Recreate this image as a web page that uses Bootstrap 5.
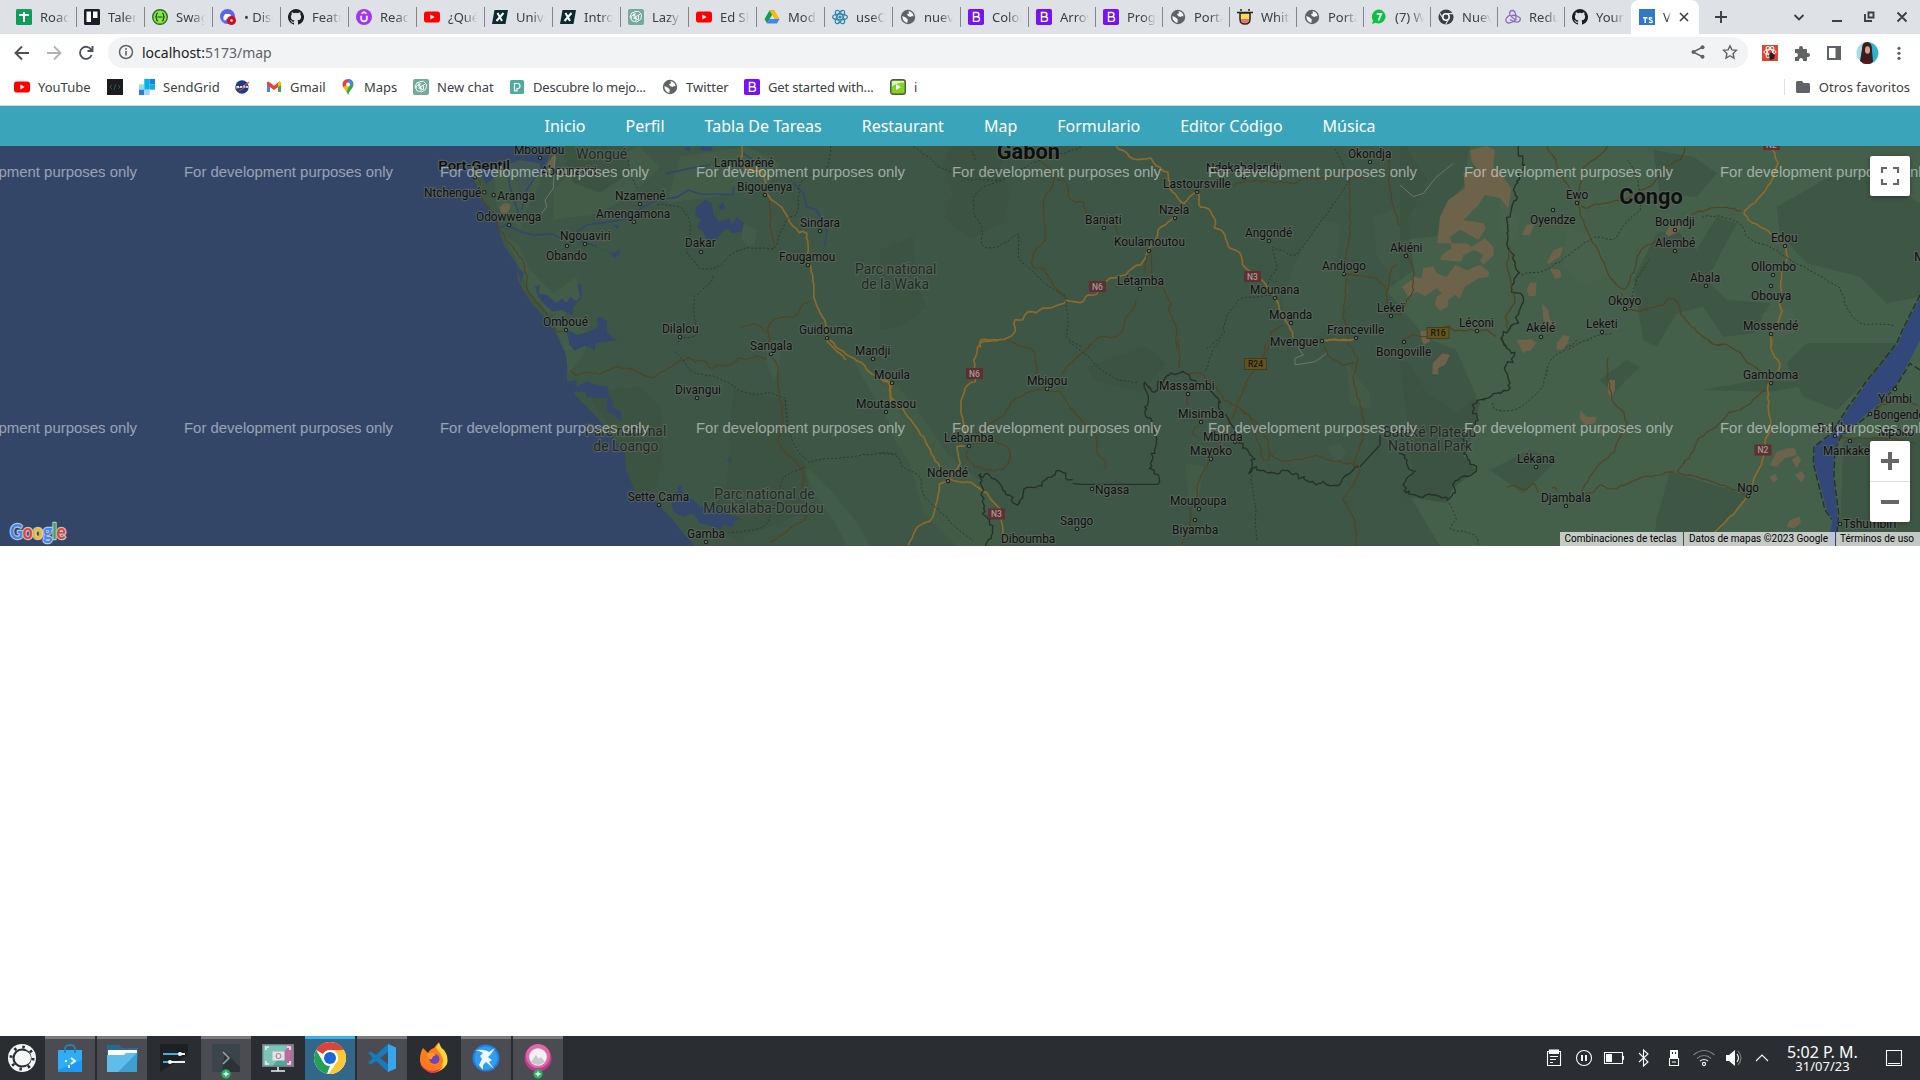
<!DOCTYPE html>
<html lang="es">
<head>
<meta charset="utf-8">
<title>Vite + React + TS</title>
<link rel="stylesheet" href="https://cdn.jsdelivr.net/npm/bootstrap@5.3.0/dist/css/bootstrap.min.css">
<style>
body{font-family:"Noto Sans","Open Sans",sans-serif;font-size:13px;line-height:18px;height:1080px;overflow:hidden;color:#3c4043}
svg{display:block;flex:none}
.ic{width:16px;height:16px}
.strip{height:34px;background:#dee1e6;padding-left:9px}
.tb{width:68px;height:34px;padding-left:7px;position:relative}
.tb.nar{width:67px}
.tb::after{content:"";position:absolute;right:0;top:7px;width:1px;height:20px;background:#80868b}
.tb.nosep::after{display:none}
.tt{width:29px;overflow:hidden;white-space:nowrap;-webkit-mask-image:linear-gradient(90deg,#000 55%,transparent)}
.tb.act{width:68px;background:#fff;border-radius:8px 8px 0 0;padding-left:8px;margin-left:-1px}
.tb.act::after{display:none}
.tb.act .tt{width:8px}
.tool{height:36px}
.omni{height:31px;width:1640px;border-radius:16px;background:#f1f3f4;font-size:14px;color:#5f6368;padding-left:10px;padding-right:10px}
.omni b{font-weight:400;color:#202124}
.omni .url{padding-top:2px}
.marks{height:36px;border-bottom:1px solid #d5d7da;padding:0 10px 1px 14px;gap:16px;white-space:nowrap}
.marks .mk{gap:8px}
.m58{width:58px}.m57{width:57px}.m66{width:66px}.m77{width:77px}.m79{width:79px}.m80{width:80px}
.m130{width:130px;letter-spacing:-.16px}.m137{width:137px;letter-spacing:-.22px}
.site{height:40px;background:#3aa5ba;gap:40px;font-size:16px;color:#fff}
.site a{color:#fff;text-decoration:none}
.mapbox{height:400px;background:#344668;position:relative;overflow:hidden}
.lb{font-family:Roboto,sans-serif;font-size:36px;fill:#0d100e;stroke:#5c665f;stroke-opacity:.75;stroke-width:7px;paint-order:stroke;stroke-linejoin:round}
.lb.pk{font-size:42px;fill:#1d2b23}
.lb.big{font-size:66px;font-weight:700}
.lb.cap{font-size:39px;font-weight:500}
.wm{font-family:"Liberation Sans",sans-serif;font-size:15.400px;fill:#fff;fill-opacity:.5}
.y{fill:none;stroke:#8f6a29;stroke-width:5;stroke-linejoin:round}
.b{fill:none;stroke:#54431f;stroke-width:3.4;stroke-linejoin:round}
.d{fill:none;stroke:#2b3830;stroke-width:3;stroke-dasharray:6 6}
.k{fill:none;stroke:#26302a;stroke-width:4;stroke-linejoin:round}
.w{fill:#33466c}
.wl{fill:none;stroke:#33466c;stroke-width:5}
.t{fill:#6d634a}
.l{fill:#445f4a}
.g{fill:#3c5341}
.ctl{position:absolute;right:10px;width:40px;background:#fff;border-radius:2px;box-shadow:0 1px 4px rgba(0,0,0,.3)}
.attr{position:absolute;right:0;bottom:0;height:14px;font:10px/14px Roboto,sans-serif;color:#000;gap:1px}
.attr span{background:rgba(245,245,245,.72);text-align:center;white-space:nowrap;padding-right:2px}
.task{height:44px;background:#2a2e32;color:#fcfcfc}
.tk{width:50px;height:44px;margin-right:2px;position:relative;border-top:3px solid transparent}
.tk.on{background:#4b4c51;border-top-color:#76787b}
.tk.cur{background:#33678a;border-top-color:#3daee9}
.tk>svg{margin-bottom:3px}
.plus{position:absolute;left:20px;bottom:-2px}
.clk{width:80px;font-size:16px;line-height:17px;text-align:center;white-space:nowrap;padding-left:1px}
.clk small{display:block;font-size:13px;line-height:11px}
</style>
<script src="https://cdn.jsdelivr.net/npm/bootstrap@5.3.0/dist/js/bootstrap.bundle.min.js"></script>
</head>
<body class="d-flex flex-column bg-white">
<svg width="0" height="0" class="position-absolute">
<symbol id="sheet" viewBox="0 0 16 16"><rect width="16" height="16" rx="1.5" fill="#0f9d58"/><path d="M3 6h10M8 3v10" stroke="#fff" stroke-width="2"/></symbol>
<symbol id="trello" viewBox="0 0 16 16"><rect width="16" height="16" rx="1.5" fill="#1c1c2a"/><path d="M2.5 2.500h4.500v10.500h-4.500zM9 2.500h4.500v6.500H9z" fill="#fff"/></symbol>
<symbol id="swag" viewBox="0 0 16 16"><circle cx="8" cy="8" r="7.300" fill="#85ea2d" stroke="#2f6b2f" stroke-width="1.400"/><path d="M6 4Q4.500 4 4.500 6T3.300 8q1.200 0 1.200 2T6 12M10 4q1.500 0 1.500 2t1.200 2q-1.200 0-1.200 2T10 12M5.500 8h5" stroke="#173647" fill="none" stroke-width="1.200"/></symbol>
<symbol id="disc" viewBox="0 0 16 16"><circle cx="7.500" cy="7.500" r="7.500" fill="#5865f2"/><path d="M3.500 11q-.5-4 1.500-6h5q2 2 1.500 6l-2 .5-1-1.300H6.500l-1 1.300z" fill="#fff"/><circle cx="11.500" cy="11.500" r="4.500" fill="#d30b14"/><circle cx="11.500" cy="11.500" r="1.300" fill="#fff"/></symbol>
<symbol id="gh" viewBox="0 0 16 16"><path fill="#1b1f23" d="M8 0a8 8 0 0 0-2.530 15.590c.4.070.55-.17.55-.38v-1.490c-2.230.49-2.690-.95-2.690-.95-.36-.92-.89-1.170-.89-1.170-.73-.49.050-.48.050-.48.8.060 1.230.83 1.230.83.71 1.220 1.870.87 2.330.66.070-.51.280-.87.5-1.070-1.770-.2-3.640-.89-3.640-3.950 0-.87.31-1.590.82-2.150-.080-.2-.36-1.020.080-2.120 0 0 .67-.21 2.200.82a7.600 7.600 0 0 1 4 0c1.530-1.040 2.200-.82 2.200-.82.44 1.100.16 1.920.080 2.120.51.560.82 1.280.82 2.150 0 3.070-1.870 3.750-3.650 3.950.29.250.54.730.54 1.480v2.190c0 .21.150.46.55.38A8 8 0 0 0 8 0z"/></symbol>
<symbol id="udemy" viewBox="0 0 16 16"><circle cx="8" cy="8" r="8" fill="#a435f0"/><path d="M5.200 6.800v3a2.800 2.500 0 0 0 5.600 0v-3M5.500 4.600 8 3l2.500 1.600" fill="none" stroke="#fff" stroke-width="1.700"/></symbol>
<symbol id="yt" viewBox="0 0 16 16"><rect y="2.500" width="16" height="11" rx="2.800" fill="#f00"/><path d="M6.400 5.600v4.800L10.600 8z" fill="#fff"/></symbol>
<symbol id="xx" viewBox="0 0 16 16"><path d="M2.500 1H16l-2.500 14H0z" fill="#0b2a30"/><path d="M5.500 4l4.500 8M11.500 4 4.500 12" stroke="#fff" stroke-width="2"/></symbol>
<symbol id="gpt" viewBox="0 0 16 16"><rect width="16" height="16" rx="2" fill="#75a99c"/><g fill="none" stroke="#fff" stroke-width=".9"><path d="M8 2.500q3-1 4.200 1.500 2.300 1.500 1 4 .2 3-2.400 3.600-2 2.300-4.200.8-3 .3-3.500-2.500-2-2-.3-4Q3.500 3 6 3.300 7 2.300 8 2.500z"/><path d="M6 3.500v5l4.500 2.500M12.500 5 8 7.500V12M3.300 9.500V7L8 4.500M10.500 6.500v4M8 7.500 5.500 6M5.500 9.500 8 8.500"/></g></symbol>
<symbol id="drive" viewBox="0 0 16 16"><path d="M5.500 1.500h5L8 6 3 14.500.500 10z" fill="#0f9d58"/><path d="M5.500 1.500h5l5 8.500h-5z" fill="#fbbc04"/><path d="M5.500 10h10L13 14.500H3z" fill="#4285f4"/></symbol>
<symbol id="react" viewBox="0 0 16 16"><g fill="none" stroke="#2c87a8" stroke-width="1.200"><ellipse cx="8" cy="8" rx="7.400" ry="2.900"/><ellipse cx="8" cy="8" rx="7.400" ry="2.900" transform="rotate(60 8 8)"/><ellipse cx="8" cy="8" rx="7.400" ry="2.900" transform="rotate(120 8 8)"/></g><circle cx="8" cy="8" r="1.600" fill="#2c87a8"/></symbol>
<symbol id="globe" viewBox="0 0 16 16"><circle cx="8" cy="8" r="7.200" fill="#5f6368"/><path d="M8.500 2q5 1 5 5.500L12 7l-1.500 1L8 7 7 5l2-.5zM2.300 7l3.500 1.500 2 2-.5 3.500Q2.500 12.500 2.300 7z" fill="#fff" opacity=".95"/></symbol>
<symbol id="boot" viewBox="0 0 16 16"><rect width="16" height="16" rx="1.800" fill="#7712f5"/><path d="M5.500 3.500h3.300a2.100 2.100 0 0 1 0 4.200H5.500zm0 4.200h3.700a2.300 2.300 0 0 1 0 4.700H5.500z" fill="none" stroke="#fff" stroke-width="1.400"/></symbol>
<symbol id="mask" viewBox="0 0 16 16"><path d="M0 3.500h16M4 0v2M12 0v2" stroke="#222" stroke-width="1.500"/><path d="M3 4h10v6q0 5-5 5t-5-5z" fill="#fbdc4a" stroke="#222" stroke-width="1.500"/><path d="M4 10h8q0 4-4 4t-4-4z" fill="#ef6a85"/></symbol>
<symbol id="wa" viewBox="0 0 16 16"><path d="M8 .5a7 7 0 1 1-3.500 13.300L1 15l1-3.500A7.200 7.200 0 0 1 8 .5z" fill="#0ac244"/><path d="M5.800 4.800h4.400L7.500 11.500" stroke="#fff" stroke-width="1.800" fill="none"/></symbol>
<symbol id="chr" viewBox="0 0 16 16"><circle cx="8" cy="8" r="7.600" fill="#3c4043"/><circle cx="8" cy="8" r="3.200" fill="none" stroke="#fff" stroke-width="1.500"/><path d="M8 4.600h7M5 9.500 1.700 4M10.800 9.800 7.600 15.500" stroke="#dee1e6" stroke-width="1.100"/></symbol>
<symbol id="redux" viewBox="0 0 16 16"><g fill="none" stroke="#8b6ac4" stroke-width="1.300"><path d="M11 9.500Q11 1.500 7.500 1.500T5 6q2 3 6 5M5 6q-5 3-4 6t5 1.500 5.500-3.500M5 10.500Q12 15 14.500 12T12 7Q9 5.500 6 7"/></g></symbol>
<symbol id="ts" viewBox="0 0 16 16"><rect width="16" height="16" fill="#3178c6"/><path d="M4 8.700h4.500M6.200 8.700V14M13.200 9.300q-3-1.300-3 .5 0 .9 1.500 1.300t1.500 1.400q0 1.800-3.300.7" fill="none" stroke="#fff" stroke-width="1.400"/></symbol>
<symbol id="chrome" viewBox="0 0 32 32"><circle cx="16" cy="16" r="16" fill="#fff"/><path d="M16 0a16 16 0 0 1 13.860 8H16a8 8 0 0 0-6.930 4L2.140 8A16 16 0 0 1 16 0z" fill="#dc4437"/><path d="M2.140 8 9.070 20A8 8 0 0 0 16 24L13 31.700A16 16 0 0 1 2.140 8z" fill="#22a055"/><path d="M29.860 8A16 16 0 0 1 14.500 31.900L22.930 20A8 8 0 0 0 22 10.500L20 8z" fill="#fcc934"/><circle cx="16" cy="16" r="7.800" fill="#fff"/><circle cx="16" cy="16" r="6" fill="#1a67dd"/></symbol>
</svg>

<header>
 <div class="strip d-flex" id="tabs"></div>
 <div class="tool d-flex align-items-center">
  <svg width="108" height="36" viewBox="0 34 108 36" fill="none" stroke="#4d5156" stroke-width="1.900"><path d="M29 53H16M22 46.500 15.500 53l6.500 6.500"/><path stroke="#b0b3b6" d="M47 53h13M54 46.500l6.500 6.500-6.500 6.500"/><path d="M91.300 50a6 6 0 1 0 .3 5M92.500 46v5h-5"/></svg>
  <div class="omni d-flex align-items-center gap-2">
   <svg class="ic" viewBox="0 0 16 16"><circle cx="8" cy="8" r="6.500" fill="none" stroke="#5f6368" stroke-width="1.500"/><path d="M8 7v4.500M8 4v1.700" stroke="#5f6368" stroke-width="1.600"/></svg>
   <span class="url flex-grow-1"><b>localhost:</b>5173/map</span>
   <svg class="ic me-2" viewBox="0 0 16 16" fill="#5f6368"><path d="M13 3 3 8l10 5" fill="none" stroke="#5f6368" stroke-width="1.400"/><circle cx="3.500" cy="8" r="2"/><circle cx="12.500" cy="3.300" r="2"/><circle cx="12.500" cy="12.700" r="2"/></svg>
   <svg class="ic" viewBox="0 0 16 16"><path d="M8 1.800l1.900 4.100 4.500.5-3.300 3.100.9 4.500-4-2.300L4 14l.9-4.500L1.600 6.400l4.500-.5z" fill="none" stroke="#5f6368" stroke-width="1.400"/></svg>
  </div>
  <svg width="172" height="36" viewBox="1748 34 172 36"><rect x="1762" y="45" width="16" height="16" fill="#dc4637"/><g fill="none" stroke="#fff"><ellipse cx="1770" cy="52" rx="6" ry="2.500"/><ellipse cx="1770" cy="52" rx="6" ry="2.500" transform="rotate(60 1770 52)"/><ellipse cx="1770" cy="52" rx="6" ry="2.500" transform="rotate(120 1770 52)"/></g><path d="M1769 55l2-3 4 3-1 4-4 1z" fill="#301e1c"/>
  <path d="M1795 49h4v-1a2 2 0 0 1 4 0v1h4v4h1a2 2 0 0 1 0 4h-1v4h-4v-1a2 2 0 0 0-4 0v1h-4v-4h1a2 2 0 0 0 0-4h-1z" fill="#5f6368"/><path d="M1828 47h12v12h-12z" fill="none" stroke="#5f6368" stroke-width="2"/><path d="M1835.500 47h5v12h-5z" fill="#5f6368"/>
  <circle cx="1867.500" cy="53" r="11" fill="#a9dbe4"/><path d="M1867.500 42a11 11 0 0 1 5 20.700z" fill="#2db4cc"/><path d="M1867 42q-5 0-5 7l-2 12q3 3 7 3t6-2l-1-12q0-8-5-8z" fill="#3b1d20"/><ellipse cx="1867.500" cy="50" rx="2.500" ry="3.800" fill="#d9a290"/><path d="M1862 63q5-6 10 0-5 2-10 0z" fill="#61151f"/><g fill="#5f6368"><circle cx="1899" cy="48.300" r="1.600"/><circle cx="1899" cy="53.300" r="1.600"/><circle cx="1899" cy="58.300" r="1.600"/></g></svg>
 </div>
 <div class="marks d-flex align-items-center">
  <div class="mk m77 d-flex align-items-center"><svg class="ic"><use href="#yt"/></svg>YouTube</div>
  <svg class="ic" viewBox="0 0 16 16"><path d="M0 0h16v16H0z" fill="#1c1b1f"/><path d="M5 6 3 8l2 2M11 6l2 2-2 2M9 5l-2 6" fill="none" stroke="#1c5a54"/></svg>
  <div class="mk m79 d-flex align-items-center"><svg class="ic" viewBox="0 0 16 16"><path d="M0 5.300h5.300v5.400H0z" fill="#9dd6f5"/><path d="M0 10.700h5.300V16H0z" fill="#1a82e2"/><path d="M5.300 0h5.400v10.700H5.300z" fill="#00b3e3"/><path d="M10.700 0H16v5.300h-5.300z" fill="#1a82e2"/><path d="M10.700 5.300H16v5.400h-5.300z" fill="#1aa5ee"/><path d="M5.300 10.700h5.400V16H5.300z" fill="#9dd6f5"/></svg>SendGrid</div>
  <svg class="ic" viewBox="0 0 16 16"><circle cx="8" cy="8" r="6.700" fill="#1c3d86"/><path d="M1 10q7-1 14-7-4 7-10 9" fill="none" stroke="#dd4b4b"/><path d="M3 9V7l1.500 2V7M6 9l1-2 1 2M11 7H9.500l1 1-1 1M12 9l1-2 1 2" stroke="#fff" fill="none"/></svg>
  <div class="mk m58 d-flex align-items-center"><svg class="ic" viewBox="0 0 16 16"><path d="M1 3.500V13h3V7z" fill="#4285f4"/><path d="M15 3.500V13h-3V7z" fill="#34a853"/><path d="M1 3.500V6l7 5 7-5V3.500L13.500 2.500 8 6.700 2.500 2.500z" fill="#ea4335"/><path d="M15 3.500V6l-3 2.200V3.700l1.500-1.200z" fill="#fbbc04"/></svg>Gmail</div>
  <div class="mk m57 d-flex align-items-center"><svg class="ic" viewBox="0 0 16 16"><path d="M8 0a5.500 5.500 0 0 1 5.500 5.500C13.500 9 9.500 11 8 16z" fill="#34a853"/><path d="M8 0a5.500 5.500 0 0 0-5.500 5.500Q2.500 7 3.500 8.500L8 5.500z" fill="#ea4335"/><path d="M8 0q4 0 5.200 4L8 8z" fill="#4285f4"/><path d="M3.500 8.500 8 5l2 3-3.500 5z" fill="#fbbc04"/><path d="M6.500 13Q7.500 14 8 16q1.500-5 4-7.500L9 7z" fill="#34a853"/><circle cx="8" cy="5.500" r="2" fill="#fff"/></svg>Maps</div>
  <div class="mk m80 d-flex align-items-center"><svg class="ic"><use href="#gpt"/></svg>New chat</div>
  <div class="mk m137 d-flex align-items-center"><svg class="ic" viewBox="0 0 16 16"><rect x="1" y="1" width="14" height="14" rx="1.500" fill="#4fab9d"/><path d="M5.500 4.500h3q2.500 0 2.500 2.500T8.500 9.500H8V12H5.500z" fill="none" stroke="#fff" stroke-width="1.200"/></svg>Descubre lo mejo...</div>
  <div class="mk m66 d-flex align-items-center"><svg class="ic"><use href="#globe"/></svg>Twitter</div>
  <div class="mk m130 d-flex align-items-center"><svg class="ic"><use href="#boot"/></svg>Get started with...</div>
  <div class="mk d-flex align-items-center"><svg class="ic" viewBox="0 0 16 16"><rect x=".7" y=".7" width="14.600" height="14.600" rx="2.500" fill="#7fd321" stroke="#4c5a4a" stroke-width="1.400"/><path d="M2 2h12v1.500q-7 0-12 4z" fill="#dff3c4"/><path d="M6 5v6l5-3z" fill="#fff"/></svg>i</div>
  <div class="mk d-flex align-items-center ms-auto"><span class="border-start" style="height:16px;margin-right:2px"></span><svg class="ic" viewBox="0 0 16 16"><path d="M1 3.500Q1 2 2.500 2H7l1.500 2h5Q15 4 15 5.500v7q0 1.500-1.500 1.500h-11Q1 14 1 12.500z" fill="#5f6368"/></svg>Otros favoritos</div>
 </div>
</header>

<nav class="site d-flex justify-content-center align-items-center">
 <a>Inicio</a><a>Perfil</a><a>Tabla De Tareas</a><a>Restaurant</a><a>Map</a><a>Formulario</a><a>Editor Código</a><a>Música</a>
</nav>

<main class="flex-grow-1">
<div class="mapbox">
<svg width="1920" height="400" viewBox="0 146 1920 400">
<rect y="146" width="1920" height="400" fill="#344668"/>
<!-- land mass -->
<path fill="#3e5645" d="M573 146L572 150 558 154 552 150 548 158 542 172 534 180 528 200 518 192 514 178 508 164 500 162 496 176 486 184 480 172 474 168 472 175 483 200 497 218 500 234 505 247 517 265 518 280 523 290 533 305 547 320 556 332 563 344 567 360 567 380 577 397 593 413 613 437 625 453 626 470 637 483 647 490 657 503 673 520 683 533 695 546H1920V146z"/>
<!-- coastal and valley strips -->
<g transform="translate(380 140) scale(.33333)"><path class="l" d="M340 90l80-30 60 10 0 60-40 80-20 60-30-40-40-30zM365 280L420 320 450 390 520 460 590 410 600 470 540 540 480 500 440 440 415 370zM520 560l50-10 60 30-20 50h-60zM520 150l60-60 200-70 60 60-80 80-100 60-140 20zM900 50l200-30 100 50-40 80-160 20-140 20zM1090 250l40 20-5 40-20 10-20-20z" opacity=".75"/><path class="g" d="M540 18h200l10 80-90 60-80-30z"/></g>
<g transform="translate(380 340) scale(.33333)"><path class="g" d="M690 150l90-10 60 60 10 130-20 110-60 30-30-80-5-50-60-100-40-60zM1060 150l160 30 20 150 50 60-20 130-200 80-100-60 70-100z"/><path class="l" d="M565 100L550 0h80l-30 60zM1280 380l80 80 80 100 30 58h-70l-30-60-60-90-30-60zM1160 0h40v90l-20 30-20-50zM1410 40l70 60 80 110v110l-60-120-60-100z" opacity=".65"/></g>
<g transform="translate(880 140) scale(.33333)"><path class="g" d="M210 18h190l-40 60 30 80-20 90-100 50-80-70 30-70-30-80zM0 330l100-40 10 150 30 60-80 60-60 10z" opacity=".8"/><path class="l" d="M1240 380l80-140 60 10-10 120 40 80-20 80-110 80-70-60 0-80zM1560 200l-80 30 10 120 70 90z" opacity=".45"/></g>
<g transform="translate(880 340) scale(.33333)"><path class="l" d="M0 90l80 80 60 80 70 100 100 80 50 100v88H230l-100-100-40-150-60-90zM915 370l60 10-20 100-30-10zM1400 70l70 90 0 50-60-20zM1340 320l40-10 20 30-30 30z" opacity=".6"/><path class="g" d="M620 80l180-60 60 50-80 90-140-40z" opacity=".7"/></g>
<path class="l" d="M1406 146h514v400H1440l-30-50 34-30 10-26 22-20 0-25-20-45-30-12-40-48 28-20-6-50 20-40z"/>
<!-- woodland patches on the plateau -->
<g transform="translate(1400 140) scale(.33333)"><path class="g" d="M0 18h210l-10 60-10 60-60 70-20 80L0 300zM1130 200l160-90 120-10 150 90v280l-100 20-80-80-160-40-80-90zM700 420l70-140 60-10 60 60 60-100 60 20-90 170 60 60 130 10-50 90-90 10-60-90-80 20-60 100-40-20zM760 30l120 20 70 50-60 70-110-10z" opacity=".7"/><path fill="#506657" opacity=".25" d="M500 260l90 30 40 110-70 40-70-60zM1080 520l90-20 30 70-90 40zM300 180l60 60-20 70-40-30z"/></g>
<g transform="translate(1400 340) scale(.33333)"><path class="g" d="M0 60l30 10 50 90 90 60 50-45 20 10-22 100-30 60 38 44-70 60-16 40-130-20-10-30 40-30z"/><path class="g" d="M810 395l230 70-120 153H760l10-80zM1160 70l60-60h270l-40 70-80 70-60 60-100-40zM1330 300l230-20v338h-240zM600 120l80-60 40 20-80 80zM910 150l160-30 190 10-150 25zM270 390l120-60 80 30-100 100z" opacity=".7"/></g>
<!-- savanna -->
<g transform="translate(1400 140) scale(.33333)"><path class="t" d="M210 30L260 18 285 30 280 80 300 100 335 145 325 205 300 175 255 165 235 195 190 240 250 250 258 265 235 300 200 280 180 270 150 290 155 310 112 310 120 230 145 180 195 145 190 100 235 90 215 65zM125 345L155 325 150 310 200 310 215 320 255 295 280 320 282 345 250 375 240 360 250 345 225 330 190 345 185 365 120 360zM5 440L35 420 40 410 65 415 70 385 100 378 110 400 140 410 165 375 200 390 240 375 268 395 265 412 235 415 195 440 180 475 165 465 145 480 145 500 120 512 105 495 110 470 125 460 110 445 75 468 50 455 25 470zM365 285l15-30 25-5-15 35zM440 370l20-40 30-10-10 30-30 20zM450 385l30 5 5 20-20 8zM380 450l10-22 20 0-3 40-20 0zM425 490l20 20 5 30 20 10-15 15-25 5 0-40zM355 600l40-2 15 10-20 25-25 0zM470 610l20-25 20 5-20 38-20 2zM60 575l25-5 5 35-20 10zM795 280l20-30 30 0-10 25-30 15z"/></g>
<g transform="translate(1400 340) scale(.33333)"><path class="t" d="M350 0h50l-10 25-20 15zM475 5h35l-30 25zM98 70l30-30 22 5-15 30-20 10 0 18-18 0zM625 120l20 0 0 30-12 25-10-20zM540 210l20 20 30 0-5 20-30 5-15-20zM595 265l15 5-5 18zM1110 375l20-40 30-10 25 0 5 20-35 10-25 25zM1175 360l20-15 8 15-12 25zM1185 405l20-12 10 15-10 20zM1108 410l18-8 7 15-12 12zM1160 560l10-20 30-10 3 20-20 15z"/></g>
<g transform="translate(380 140) scale(.33333)"><path class="t" d="M360 200q15-18 32-5 0 20-20 25-16-4-12-20zM500 75l20-30 8 10-8 35z"/></g>
<!-- lakes, lagoons, rivers -->
<g transform="translate(380 140) scale(.33333)"><path class="w" d="M945 225L950 200 975 180 995 190 1000 225 1020 245 1050 235 1055 255 1070 230 1092 250 1085 275 1055 280 1045 265 1025 275 1010 300 980 300 970 275 950 260 965 240zM1015 200l15-15 5 20-10 5zM640 320l60 20 22-15-5 20-15 10-12-20zM465 440L480 435 475 460 500 465 530 490 545 475 560 490 570 470 590 485 600 470 592 430 605 435 605 475 580 500 575 525 545 510 520 515 495 495 475 470zM560 575L570 572 590 585 625 575 655 560 650 535 665 530 680 545 682 580 710 600 650 600 640 625 600 612 570 618zM910 25l20-5 0 15zM960 20h35l0 12-30 0zM698 255l20 0-5 12zM412 380l20 20-10 25z"/><path class="wl" d="M350 265L380 255 420 275 460 285 520 282 550 300M590 275L620 255 690 245 750 235 790 200 830 180 890 172 925 150 960 162 1060 163 1060 140M560 285l50 22 40 12M1240 130l30 30 10 40 30 10 30 60-5 50M860 100l70-15 60-10M480 90l-40 60-15 60M380 80l10 60 25 80M1120 60l-30-20"/></g>
<g transform="translate(380 340) scale(.33333)"><path class="w" d="M568 10l60-10h90l-70 8-5 25-10-10-20-5-30 15zM565 125L590 120 590 140 620 125 650 135 685 140 685 170 697 180 697 200 722 215 725 245 700 225 680 210 682 175 620 172 615 155 580 155zM870 460L895 455 895 435 905 435 905 455 940 480 960 500 1000 495 1040 510 1050 525 1082 535 1060 545 1060 562 1030 555 1020 570 1000 560 960 550 940 520 910 530 880 515zM1040 360l15-8-2 15z"/></g>
<g transform="translate(1400 140) scale(.33333)"><path d="M1560 475L1515 560 1495 610 1440 680 1400 730 1350 800 1300 880 1245 920 1243 970 1260 1030 1280 1110 1298 1138 1283 1218H1310L1312 1120 1300 1010 1302 930 1320 890 1360 860 1400 820 1440 790 1490 730 1530 660 1560 600z" fill="#32487a"/><path class="k" stroke-dasharray="20 8" d="M1560 465L1512 560 1490 610 1435 680 1395 730 1345 800 1295 880 1242 920 1240 970 1255 1030 1275 1110 1295 1138M1560 690L1530 670 1490 735 1440 795 1400 830 1322 890 1305 930 1302 1010 1316 1120 1308 1218"/></g>
<!-- road network -->
<g transform="translate(380 140) scale(.33333)"><path class="b" d="M298 120l10 60 40 50 10 40 70 90 12 55 0 20 10 25 60 75 20 40 25 2M1170 180l0 70 10 60 5 20M1300 480l-30 15-25 35-60 5-20 20-5 25-25-30-60 15M1165 570l5 60"/><path class="y" d="M1085 18l5 20-10 25 15 25 55 8 10 60 10 20 30 20 30 50 25 30 25 0 5 90 15 45 5 80 30 50 5 60 60 60"/><path d="M525 45l-5 100-25 35 5 20-15 20" fill="none" stroke="#70746b" stroke-width="3"/><path class="d" d="M745 60l15 60 15 30M820 195h75l35 40 0 80 -15 20 10 15 35 35 45 3 55-50 40-15 60 0 20 10 20-50 25-50 30-10 0-80 20-30 60-15 15-30 5-60 80-5 60 0 40-10 80-2M1000 390v30l-60 50 5 60 7 60-50 0-15 40"/></g>
<g transform="translate(380 340) scale(.33333)"><path class="b" d="M570 90l15 15 40-8 30 5 50-20 40 0 60 30h25v-8l95-53 20 12 25 0 25 22 25-10 30 0 30-22 30 6 10-13 50 12M1175 50L1195 80 1195 150 1210 220 1200 280 1190 305 1220 340 1270 390 1268 450M1285 520L1270 545 1240 555 1215 580 1180 600 1165 618"/><path class="y" d="M1350 0l50 45 50 25 20 30 35 20 25 10 0 20 5 50"/><path class="d" d="M885 35l60 65 70 10 60 40 60 15 30-10 50 20 5 80 25 70 40 40 240-30 35 10M1285 375l-80 40-20 80-25 60-15 10-110 15"/></g>
<g transform="translate(880 140) scale(.33333)"><path class="y" d="M708 18L760 58 810 55 845 90 865 95 870 150 910 190 945 155 955 160 957 200 990 205 1007 245 1005 265 1032 275 1045 325 1078 335 1088 375 1130 410 1155 430 1187 475 1215 545 1232 560 1240 595M910 190L880 235 838 265 828 300 805 333 785 370 755 385 735 405 690 415 655 440 650 465 620 465 605 488 560 482 545 495 485 505 470 518 440 515 430 538 403 540 405 580 375 598 300 605 305 630M1325 600l105 0"/><path class="b" d="M480 60l40 40 0 30-30 50 5 120-30 30-10 50 40 10 20 40 45 45M525 125l20-10 20 30-5 20 20 20h30l0 20 20 20M700 250l20 40M800 340l-5 65M815 340l0 60 30 35 30 60-10 20 25 50 0 50 0 15M770 470L765 500 735 540 725 575 710 590 650 590 625 625M1055 140l40-20 150 10 30-15 60 0 60-10 70 10M1410 110l0 150-10 80-10 60 100 15 30 30 0 60 40 20M1400 410l-10 110 15 60M1160 640l15-65 45-25M1530 30l-5 90 15 80 20 60M1560 370l-25 10-15 80"/><path class="d" d="M100 20l80 60 90 40 100 0 80-50 160-50M270 18l20 60M370 120l-60 20-30 30 5 60 20 20 0 70 40 3 70-40 0 70 80 80 60 30 10 60-5 70 50 30M1360 18L1412 120 1245 352 1170 315 1195 380 1160 435 1180 465 1080 475 1040 530 1030 580 975 630"/></g>
<g transform="translate(880 340) scale(.33333)"><path class="y" d="M355 0h-50l-25 60 10 60-35 20-15 60 20 100M265 318L230 318 240 375 205 420M0 118l35 10-5 40 40 40 60 85 40 75 30 50 70 10 50 30 40 50 10 80 10 35M205 425l-25 5-10 60-15 50-45 20-25 60M1330 2l100-5M1250 25l70-20"/><path class="b" d="M380 0l80 30 15 90 20 25-50 10-50 30-20 40-50 30-60 40M265 318L260 350 285 380 340 392 375 385 395 345 375 315 340 302 270 312M540 110l30-40 40-30 30-40M500 150L540 155 570 200 610 245 630 270 650 290 650 340 675 365 670 395M900 90l-5-90M1160 0L1145 60 1110 105 1070 200 1035 280 995 350 955 425 950 470 930 510 930 550 905 618M920 100L960 100 1000 135 1035 180 1070 200 1110 230 1130 290 1150 365 1165 365 1170 340 1200 365 1280 355 1310 345 1350 360 1430 375M1075 200L1125 245 1165 300 1165 345M1400 0L1435 60 1420 120 1452 240 1450 300 1420 370 1442 385 1425 430 1388 475 1425 540 1430 618M965 250l-25 15 0 25 20 0M1330 10L1345 50 1390 75 1435 65M922 162L920 205"/><path d="M1255 25l15 20-25 10 0 20 60-10 35-25" fill="none" stroke="#70746b" stroke-width="3"/><path class="k" d="M318 618L335 590 335 560 310 518 305 420 295 405M292 410L325 403 365 440 375 468 395 465 405 500 420 490 425 455 455 445 485 438 500 410 520 405 543 387 578 430M835 433L832 405 810 385 820 330 830 300 815 250 797 220 800 180 797 130 825 158 835 130 870 105 910 98 945 120 990 150 1015 175 1020 215 1045 240 1080 310 1100 330 1120 355 1108 400 1115 380 1155 395 1180 405 1215 390 1310 435 1335 430 1370 438 1385 415 1440 380"/><path d="M578 430l22 3h235M1440 380l60-65v-30" fill="none" stroke="#26302a" stroke-width="4"/><path class="d" d="M0 340l50 5 20 40 50 20 10 60 80 80 80 70M565 5l60 40 20 30 60 40 60 15 30-5M1020 0l-20 20-25 80M1115 390v60l10 50 5 118"/></g>
<g transform="translate(1400 140) scale(.33333)"><path class="k" d="M355 18L365 60 370 75 365 90 340 155 350 165 330 205 320 270 325 280 320 320 335 340 355 400 352 410 335 445 345 460 368 465 368 490 350 515 352 545 330 560 300 595 320 625"/><path class="b" d="M440 18L470 60 475 100 505 135 535 195M640 0L605 40 550 80 540 140 535 200 560 275 590 320 620 390 635 420 665 450 680 445 690 410 710 380 710 350 735 315 790 300M535 195L560 205 580 195 605 190 670 180 750 140 770 120 790 85 845 55 858 18M870 225L930 205 980 200 1028 215M665 450l10 60 40 3 80-20 15-20 20 10 20 50 40 40 50 40 40 0M0 310l20 30 20 50 0 60-30 50-10 30M0 610L30 585 80 590 145 555 160 570 210 570 260 572 285 590 300 590M330 320L322 370 335 450 345 490 315 525 325 580"/><path class="y" d="M1118 30l15 40-20 60-50 60-35 25 20 30 60 30 45 35 10 40-20 40 0 60-5 40 10 30-35 60v50"/><path class="d" d="M365 405l80-15 80-60 60-40 60 10 30-50 50-40-10-90-30-60M890 240l30-15 80 10 30 30 10 30 60 20 80 50 60 30 80 50 20 60 30 40 40 10 70 0 10 15M640 580l-60 10-80 40M690 500l20-80 50-80"/><path d="M0 135l40 35 30-10 40-50 50-40" fill="none" stroke="#70746b" stroke-width="3"/></g>
<g transform="translate(1400 340) scale(.33333)"><path class="k" d="M305 0L320 30 348 40 335 65 320 70 318 90 325 110 325 150 300 160 250 175 240 185 220 190 218 215 235 235 190 290 195 345 228 388 200 410 160 430 165 460 145 478 110 460 60 470 12 455 15 425 50 395 25 385 20 350 0 340"/><path class="b" d="M925 0L945 15 980 15 1025 40 1035 65 1075 90 1105 125M1105 145L1080 160 1050 190 1010 215 990 215 950 260 900 290 882 320 882 335 830 395 955 430 1045 465M830 395L770 405 730 410 640 450 600 435 580 455 550 460M625 45L620 100 640 190 675 220 680 250 640 340 600 370 540 455M312 445l25-8 40 12 25-20 15 30M450 450l10-10 15 15M1305 290l60 5 120 0 75 20M1450 240l-20-40 40-10 90 5"/><path class="y" d="M1115 0V35L1142 70 1130 100 1105 125V215L1115 245 1095 310 1085 370 1065 410 1045 465 1000 520 940 580"/><path class="d" d="M530 0L450 60 430 140 390 180 350 210 310 215 280 205 278 175M145 485l25 50-20 30 80 20 5 30"/></g>
<g id="shields" font-family="Roboto,sans-serif" font-weight="500" font-size="8.500" text-anchor="middle"></g>
<g id="places"></g>
<g id="marksOver"></g>
<text x="10" y="539" font-family="Lato,sans-serif" font-size="20.500" font-weight="700" textLength="56" lengthAdjust="spacingAndGlyphs" stroke="#b9c3d1" stroke-width="2.500" paint-order="stroke" stroke-linejoin="round"><tspan fill="#4285f4">G</tspan><tspan fill="#ea4335">o</tspan><tspan fill="#fbbc05">o</tspan><tspan fill="#4285f4">g</tspan><tspan fill="#34a853">l</tspan><tspan fill="#ea4335">e</tspan></text>
</svg>
<div class="ctl" style="top:10px;height:40px"><svg width="40" height="40" fill="none" stroke="#666" stroke-width="2.200"><path d="M12 17v-5h5M23 12h5v5M28 23v5h-5M17 28h-5v-5"/></svg></div>
<div class="ctl" style="top:295px;height:81px"><svg width="40" height="81" fill="none" stroke="#666" stroke-width="4"><path d="M11 20h18M20 11v18M11 61h18"/><path d="M0 40.500h40" stroke="#e0e0e0" stroke-width="1"/></svg></div>
<div class="attr d-flex"><span style="width:123px">Combinaciones de teclas</span><span style="width:151px">Datos de mapas ©2023 Google</span><span style="width:84px">Términos de uso</span></div>
</div>
</main>

<footer class="task d-flex align-items-center">
 <svg width="45" height="44"><circle cx="22" cy="22" r="14" fill="#f4f5f5"/><circle cx="22" cy="22" r="8.500" fill="none" stroke="#2a2e32" stroke-width="2.200"/><circle cx="22" cy="22" r="11" fill="none" stroke="#2a2e32" stroke-width="3" stroke-dasharray="2.500 6.140"/><circle cx="24" cy="22" r="7" fill="#f4f5f5"/></svg>
 <div class="tk on d-flex align-items-center justify-content-center"><svg width="26" height="30"><path d="M1 7h24v22H1z" fill="#1d99f3"/><path d="M1 7h24v10L1 27z" fill="#2fadf5"/><path d="M8 10V6q0-4 5-4t5 4v4" fill="none" stroke="#2b7fae" stroke-width="1.800"/><path d="M14 15l4 3-4 3M9 17v2M12 22v3" fill="none" stroke="#fff" stroke-width="1.800"/></svg></div>
 <div class="tk on d-flex align-items-center justify-content-center"><svg width="32" height="30"><path d="M1 2h12l3 3h16v12H1z" fill="#246a94"/><path d="M2 7h29v5H2z" fill="#fff"/><path d="M1 12h17l2-2h11v19H1z" fill="#5fbdec"/><path d="M12 29h19V10z" fill="#3e9fd3"/></svg></div>
 <div class="tk d-flex align-items-center justify-content-center"><svg width="30" height="30"><path d="M1 1h28v28H1z" fill="#1d2023"/><path d="M1 29h28V12z" fill="#2b2f33"/><path d="M4 11h17M4 19h7" stroke="#3daee9" stroke-width="2"/><path d="M21 11h5M11 19h15" stroke="#eee" stroke-width="2"/><circle cx="21" cy="11" r="2" fill="#fff"/><circle cx="11" cy="19" r="2" fill="#fff"/></svg></div>
 <div class="tk on d-flex align-items-center justify-content-center"><svg width="28" height="28"><path d="M0 0h28v28H0z" fill="#3b4448"/><path d="M13 8l6 6 9 9v5H10z" fill="#2b3338"/><path d="M11 8l6 6-6 6" fill="none" stroke="#9aa5a9" stroke-width="1.500"/></svg><svg class="plus" width="10" height="10"><circle cx="5" cy="5" r="4.700" fill="#27ae60"/><path d="M5 2.500v5M2.500 5h5" stroke="#fff" stroke-width="1.300"/></svg></div>
 <div class="tk d-flex align-items-center justify-content-center"><svg width="32" height="30"><path d="M0 1h32v23H0z" fill="#777c80"/><path d="M1.500 2.500h29v20h-29z" fill="#4fa79c"/><path d="M19 2.500h11.500v20h-5z" fill="#bb6aa0"/><path d="M1.500 2.500H27l-16 20H1.500z" fill="#7cc4b6"/><rect x="10.500" y="8.500" width="12" height="9" fill="#e4e4e4"/><circle cx="16.500" cy="13" r="2.500" fill="none" stroke="#b3688f"/><path d="M4 7V4h3M25 4h3v3M4 18v3h3M28 18v3h-3M9 28h14M16 24v4" fill="none" stroke="#eee" stroke-width="1.600"/></svg></div>
 <div class="tk cur d-flex align-items-center justify-content-center"><svg width="32" height="32"><use href="#chrome"/></svg></div>
 <div class="tk on d-flex align-items-center justify-content-center"><svg width="28" height="28" viewBox="0 0 28 28"><path d="M20 0 8 11 3 7.500 0 9 5 14 0 19 3 20.500l5-3.500 12 11V20l-8-6 8-6z" fill="#167bbd"/><path d="M20 0l8 3.500v21L20 28z" fill="#37a6ee"/></svg></div>
 <div class="tk d-flex align-items-center justify-content-center"><svg width="30" height="32"><path d="M4 6l5 5q2-4 6-5 2-3 4-5 1 5 5 8 4 5 4 9a13.500 12.500 0 0 1-27 0Q1 11 4 6z" fill="#ff7b1c"/><path d="M17 6q2-4 3-6 1 5 5 8 5 7 3 14-4 7-11 7 8-5 7-12-2-6-7-11z" fill="#ffd33a"/><path d="M2 21q4 8 12 8 7-1 11-7-4 9-13 9-7-2-10-10z" fill="#f12f5c"/><circle cx="15.500" cy="17" r="5" fill="#6c45bb"/><path d="M8 12q5-3 9 1-4 1-4 4-4 1-5-5z" fill="#ff9b23"/></svg></div>
 <div class="tk on d-flex align-items-center justify-content-center"><svg width="28" height="28"><circle cx="14" cy="14" r="13.500" fill="#1d7fe0"/><circle cx="14" cy="14" r="11.500" fill="#2f9df0"/><path d="M3 6q10-1 14 2l6-4-4 6-3 3 4 3-3 2 5 7-8-7-3 3 0 5-4-5 3-6-2-3 3-3q-3-2-8-3z" fill="#eff8ff"/></svg></div>
 <div class="tk on d-flex align-items-center justify-content-center"><svg width="28" height="28"><circle cx="14" cy="14" r="13.500" fill="#c4388c"/><circle cx="14" cy="12" r="12" fill="#dc6ba5"/><circle cx="14" cy="13" r="8.800" fill="#f2f2f4"/><path d="M7 18l5-7 3 4 2-2 4 5q-7 6-14 0z" fill="#c8c8cc"/></svg><svg class="plus" width="10" height="10"><circle cx="5" cy="5" r="4.700" fill="#27ae60"/><path d="M5 2.500v5M2.500 5h5" stroke="#fff" stroke-width="1.300"/></svg></div>
 <svg class="ms-auto" width="242" height="44" viewBox="1540 1036 242 44" fill="none" stroke="#fcfcfc" stroke-width="1.100"><path d="M1547.500 1051.500h13v14h-13zM1550 1056.500h8M1550 1059.500h6M1550 1062.500h3"/><path d="M1549.500 1050h9v3.500h-9z" fill="#fcfcfc"/><circle cx="1584" cy="1058" r="7.500"/><path d="M1582 1055v6M1586 1055v6" stroke-width="2"/><path d="M1604.500 1052.500h18v11h-18zM1623.500 1056v4"/><path d="M1606 1054h6v8h-6z" fill="#fcfcfc" stroke="none"/><path d="M1639 1053l9 9-4.500 4v-16l4.500 4-9 8"/><path d="M1669.500 1058.500h9v7h-9zM1672 1062h4"/><path d="M1670 1050h8v8h-8z" fill="#fcfcfc" stroke="none"/><path d="M1672.500 1052v2M1675.500 1052v2" stroke="#2a2e32"/><path d="M1693.500 1055q10.500-9 21 0M1697 1058.500q7-6 14 0" stroke="#7c8083"/><path d="M1700 1061q4-3 8 0"/><circle cx="1704" cy="1064" r="1.600"/><path d="M1726 1055h3l6-5v16l-6-5h-3z" fill="#fcfcfc" stroke="none"/><path d="M1737 1054q3 4 0 8"/><path d="M1738 1051q6 7 0 14" stroke="#7c8083"/><path d="M1756 1061l6-6 6 6"/></svg>
 <div class="clk">5:02 P. M.<small>31/07/23</small></div>
 <svg width="58" height="44" viewBox="1862 1036 58 44" fill="none" stroke="#fcfcfc"><path d="M1886.500 1050.500h15v15h-15zM1888 1063.500h12" stroke-width="1.100"/></svg>
</footer>

<script>
const tabs=[["sheet","Roadmap"],["trello","Talento"],["swag","Swagger"],["disc","• Discord"],["gh","Feature"],["udemy","React"],["yt","¿Qué es"],["xx","Univers"],["xx","Introdu"],["gpt","Lazy lo"],["yt","Ed Shee"],["drive","Modulo"],["react","useCon"],["globe","nueva"],["boot","Colors"],["boot","Arrow"],["boot","Progre"],["globe","Porta"],["mask","White"],["globe","Porta"],["wa","(7) Wha"],["chr","Nueva"],["redux","Redux"],["gh","Your"]];
document.getElementById("tabs").innerHTML=tabs.map(([i,t],n)=>`<div class="tb d-flex align-items-center gap-2${n>14?" nar":""}${n==23?" nosep":""}"><svg class="ic"><use href="#${i}"/></svg><span class="tt">${t}</span></div>`).join("")+`<div class="tb act d-flex align-items-center gap-2"><svg class="ic"><use href="#ts"/></svg><span class="tt">V</span><svg width="10" height="10" stroke="#3c4043" stroke-width="1.600"><path d="M1 1l8 8M9 1 1 9"/></svg></div><svg width="220" height="34" viewBox="1699 0 220 34" fill="none" stroke="#3c4043" stroke-width="1.900"><path d="M1715 17h12M1721 11v12M1794.500 15l4.500 4.500 4.500-4.500M1832 21h10M1865 14v7h7M1868.500 12.500h5v5h-5zM1897.500 12.500l9 9M1906.500 12.500l-9 9"/></svg>`;

// give borders, roads and tracks their natural wander
let seed=7;const rnd=()=>(seed=(seed*16807)%2147483647)/2147483647-.5;
for(const [sel,step,amp] of [["path.k:not([stroke-dasharray])",9,12],["path.b",12,6],["path.y",13,5],["path.d",18,6]])
 document.querySelectorAll(".mapbox "+sel).forEach(p=>{
  const n=Math.floor(p.getTotalLength()/step);let d="",last=null;
  for(let i=0;i<=n;i++){const q=p.getPointAtLength(i*step);
   const jump=!last||Math.hypot(q.x-last.x,q.y-last.y)>step*1.05;
   d+=(jump?"M":"L")+(q.x+(jump?0:rnd()*amp)).toFixed(1)+" "+(q.y+(jump?0:rnd()*amp)).toFixed(1);last=q;}
  p.setAttribute("d",d);});

// each row: name, left, right, middle of the lettering, style, town dot x, y (tile units, origin per group)
const O={A:[380,140],B:[380,340],C:[880,140],D:[880,340],E:[1400,140],F:[1400,340]};
const P={
A:[["Port-Gentil",175,390,76,"cap",285,112],["Mboudou",402,553,28,"",480,54],["Abounaviri",482,650,92],["Wongué",588,742,43,"pk"],["Lambaréné",1002,1182,67],["Ntchengué",132,304,157,"",313,157],["Aranga",352,465,166,"",341,165],["Odowwenga",288,484,229,"",387,255],["Nzamené",705,857,166,"",780,192],["Amengamona",648,871,220,"",762,246],["Ngouaviri",540,692,286,"",615,312],["Obando",498,622,346,"",561,318],["Bigouenya",1071,1237,139,"",1155,165],["Sindara",1260,1380,247,"",1320,273],["Dakar",915,1007,309,"",963,336],["Fougamou",1197,1366,349,"",1284,375],["Omboué",489,624,544,"",558,570],["Dilalou",846,956,565,"",900,591],["Guidouma",1257,1419,568,"",1341,594]],
B:[["Sangala",1110,1237,16,"",1173,42],["Mandji",1425,1531,31,"",1479,57],["Divangui",885,1023,148,"",951,174],["Parc national",615,859,274,"pk"],["de Loango",640,835,318,"pk"],["Sette Cama",743,928,469,"",837,495],["Parc national de",1003,1304,463,"pk"],["Moukalaba-Doudou",970,1331,505,"pk"],["Gamba",921,1035,580,"",978,606]],
C:[["Gabon",350,540,34,"big"],["Parc national",-75,169,388,"pk"],["de la Waka",-56,147,431,"pk"],["Okondja",1404,1534,40,"",1470,66],["Ndekabalandji",978,1205,84,"",1092,111],["Lastoursville",849,1053,130,"",951,156],["Nzela",837,928,208,"",885,234],["Baniati",615,725,238,"",672,264],["Koulamoutou",702,915,306,"",807,333],["Angondé",1095,1237,277,"",1167,303],["Létamba",711,852,421,"",780,447],["Andjogo",1326,1458,376,"",1392,402],["Mounana",1110,1258,448,"",1185,474],["Moanda",1167,1297,523,"",1233,549],["Franceville",1341,1513,568,"",1428,594],["Mvengue",1170,1315,604,"",1326,603]],
D:[["Mouila",-18,90,103,"",36,129],["Moutassou",-72,108,190,"",18,216],["Mbigou",441,562,121,"",501,147],["Massambi",837,1004,136,"",924,162],["Misimba",894,1033,220,"",963,246],["Mbinda",969,1088,289,"",1065,305],["Mayoko",930,1056,331,"",993,357],["Lébamba",192,341,292,"",267,318],["Ndendé",141,264,397,"",204,423],["Ngasa",645,748,448,"",636,447],["Moupoupa",870,1040,481,"",957,507],["Sango",540,640,541,"",591,567],["Biyamba",876,1015,568,"",945,540],["Diboumba",363,526,595],["Batéké Plateau",1509,1789,277,"pk"],["National Park",1524,1776,319,"pk"]],
E:[["Akiéni",-30,67,322,"",18,348],["Lekeï",-69,13,502,"",-27,528],["Ewo",498,565,163,"",531,189],["Congo",658,848,169,"big"],["Oyendze",390,527,238,"",459,210],["Boundji",765,884,244,"",825,270],["Alembé",765,886,307,"",825,333],["Edou",1113,1193,292,"",1155,318],["Ollombo",1053,1188,379,"",1119,405],["Abala",870,961,412,"",918,438],["Obouya",1053,1174,466,"",1113,438],["Okoyo",624,724,481,"",675,507],["Leketi",558,653,550,"",606,576],["Léconi",177,282,547,"",231,573],["Akélé",378,466,564,"",423,591],["Mossendé",1029,1195,556,"",1113,582],["Makotimpoko",1542,1790,349]],
F:[["Bongoville",-72,94,34,"",12,6],["Gamboma",1029,1195,103,"",1113,129],["Yumbi",1434,1536,175,"",1485,147],["Bongende",1420,1574,223,"",1410,222],["Bolobo",1252,1360,262,"",1305,288],["Mpoko",1434,1543,274],["Mankake",1269,1410,331,"",1350,303],["Lékana",351,465,355,"",408,381],["Djambala",423,573,472,"",498,498],["Ngo",1012,1077,442,"",1044,468],["Tshumbiri",1329,1489,552,"",1320,552]]};
let out="";
for(const k in P){out+=`<g transform="translate(${O[k]}) scale(.33333)">`;
 for(const [n,a,b,m,c="",x,y] of P[k]){
  if(x!==undefined)out+=`<circle cx="${x}" cy="${y}" r="5" fill="#7b857e" stroke="#1d241f" stroke-width="3.500"/>`;
  out+=`<text class="lb ${c}" x="${a}" y="${m+(c=="big"?23:c=="pk"?15:13)}" textLength="${b-a}" lengthAdjust="spacingAndGlyphs">${n}</text>`;}
 out+="</g>";}
document.getElementById("places").innerHTML=out;
document.getElementById("shields").innerHTML=[["N6",1097.500,286.500],["N3",1252.500,276.500],["N6",974.500,373.500],["R24",1255.500,364,1],["N3",996.500,514],["R16",1438,333,1],["N2",1771.500,144.500],["N2",1763,450]].map(([t,x,y,r])=>`<rect x="${x-(r?11:8.500)}" y="${y-5.500}" width="${r?22:17}" height="11" fill="${r?"#65531c":"#5f2f31"}" ${r?'stroke="#3d3718" stroke-width=".8"':""}/><text x="${x}" y="${y+3.200}" fill="${r?"#15160d":"#a29a98"}">${t}</text>`).join("");
let w="";for(const y of [176.500,432.500])for(let x=-72;x<1920;x+=256)w+=`<text class="wm" x="${x}" y="${y}" textLength="209" lengthAdjust="spacingAndGlyphs">For development purposes only</text>`;
document.getElementById("marksOver").innerHTML=w;
</script>
</body>
</html>
